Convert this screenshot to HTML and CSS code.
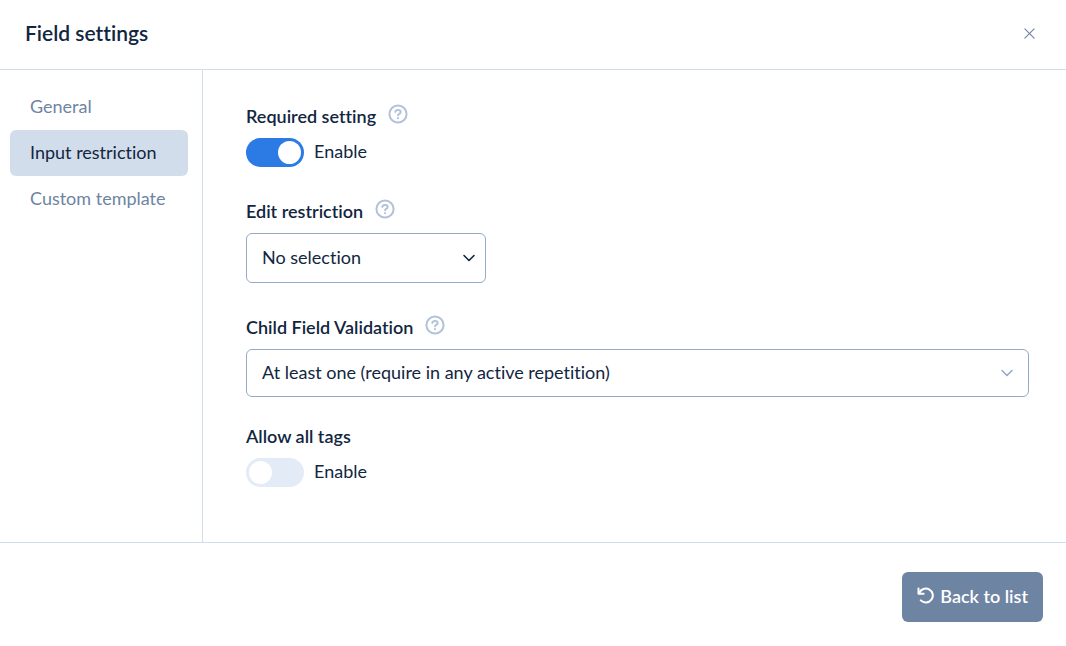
FILE: index.html
```html
<!DOCTYPE html>
<html lang="en">
  <head>
    <meta charset="UTF-8" />
    <meta name="viewport" content="width=device-width, initial-scale=1.0" />
    <title>Field settings</title>
    <link rel="stylesheet" href="styles.css">
  </head>
  <body>
    <svg class="sprite" aria-hidden="true">
      <symbol id="icon-help" viewBox="0 0 20 20">
        <circle cx="10" cy="10" r="8.6" />
        <path d="M7.3 7.9c.3-1.3 1.3-2 2.7-2 1.6 0 2.7.9 2.7 2.1 0 1.9-2.6 1.8-2.6 3.2" />
        <path d="M10 14v.3" />
      </symbol>
      <symbol id="icon-chevron" viewBox="0 0 14 14">
        <path d="M2 4.5l5 5 5-5" />
      </symbol>
    </svg>

    <div class="modal">
      <header class="modal-header">
        <h1>Field settings</h1>
        <button type="button" class="close" aria-label="Close">
          <svg viewBox="0 0 10 10"><path d="M.8.8l8.4 8.4M9.2.8L.8 9.2" /></svg>
        </button>
      </header>

      <div class="modal-body">
        <nav class="tabs">
          <a class="tab" href="#general">General</a>
          <a class="tab active" href="#restriction">Input restriction</a>
          <a class="tab" href="#template">Custom template</a>
        </nav>

        <form class="settings" id="restriction">
          <div class="field">
            <div class="field-label">
              <span id="required-label">Required setting</span>
              <svg class="help"><use href="#icon-help" /></svg>
            </div>
            <label class="toggle">
              <input type="checkbox" role="switch" aria-describedby="required-label" checked />
              <span>Enable</span>
            </label>
          </div>

          <div class="field">
            <div class="field-label">
              <label for="edit">Edit restriction</label>
              <svg class="help"><use href="#icon-help" /></svg>
            </div>
            <div class="select select-short">
              <select id="edit">
                <option>No selection</option>
              </select>
              <svg class="chevron"><use href="#icon-chevron" /></svg>
            </div>
          </div>

          <div class="field">
            <div class="field-label">
              <label for="validation">Child Field Validation</label>
              <svg class="help"><use href="#icon-help" /></svg>
            </div>
            <div class="select">
              <select id="validation">
                <option>At least one (require in any active repetition)</option>
              </select>
              <svg class="chevron"><use href="#icon-chevron" /></svg>
            </div>
          </div>

          <div class="field">
            <div class="field-label">
              <span id="tags-label">Allow all tags</span>
            </div>
            <label class="toggle">
              <input type="checkbox" role="switch" aria-describedby="tags-label" />
              <span>Enable</span>
            </label>
          </div>
        </form>
      </div>

      <footer class="modal-footer">
        <button type="button" class="btn">
          <svg viewBox="0 0 18 18">
            <path d="M1.5 1.5v5.2h5.2" />
            <path d="M2.2 6.2a7 7 0 1 1 1.6 7.2" />
          </svg>
          Back to list
        </button>
      </footer>
    </div>
  </body>
</html>
```
FILE: styles.css
```css
* {
  box-sizing: border-box;
}

body {
  margin: 0;
  font-family: Lato, "Liberation Sans", sans-serif;
  font-size: 18px;
  font-variant-ligatures: none;
  line-height: 24px;
  color: #12263f;
  background-color: #fff;
}

svg {
  fill: none;
  stroke: currentColor;
  stroke-linecap: round;
  stroke-linejoin: round;
}

.sprite {
  display: none;
}

.modal {
  display: flex;
  flex-direction: column;
  min-height: 100vh;
}

.modal-header {
  display: flex;
  align-items: center;
  justify-content: space-between;
  padding: 19px 26px 22px 25px;
  border-bottom: 1px solid #d2ddec;
}

h1 {
  margin: 0;
  font-size: 21px;
  font-weight: 600;
  line-height: 28px;
}

.close {
  display: flex;
  padding: 5px;
  border: none;
  background: none;
  color: #6e84a3;
  cursor: pointer;
}

.close svg {
  width: 11px;
  height: 11px;
}

.modal-body {
  display: flex;
  flex: 1;
}

.tabs {
  flex: 0 0 203px;
  padding: 14px 14px 14px 10px;
  border-right: 1px solid #d2ddec;
}

.tab {
  display: block;
  padding: 10px 20px 12px;
  border-radius: 6px;
  color: #6e84a3;
  text-decoration: none;
}

.tab.active {
  background-color: #d2ddec;
  color: #12263f;
}

.settings {
  display: flex;
  flex: 1;
  flex-direction: column;
  gap: 32px;
  padding: 34px 37px 34px 43px;
}

.field {
  display: flex;
  flex-direction: column;
  gap: 10px;
}

.field:last-child {
  margin-top: -5px;
}

.field-label {
  display: flex;
  gap: 12px;
  font-weight: 600;
}

.help {
  width: 20px;
  height: 20px;
  color: #b1c2d9;
  stroke-width: 2;
}

.toggle {
  display: flex;
  align-self: flex-start;
  gap: 10px;
  line-height: 26px;
}

.toggle input {
  appearance: none;
  width: 58px;
  height: 29px;
  margin: 0;
  padding: 3px;
  border-radius: 15px;
  background-color: #e3ebf6;
  cursor: pointer;
}

.toggle input::before {
  content: "";
  display: block;
  width: 23px;
  height: 23px;
  border-radius: 50%;
  background-color: #fff;
}

.toggle input:checked {
  background-color: #2c7be5;
}

.toggle input:checked::before {
  margin-left: auto;
}

.select {
  display: grid;
  align-items: center;
}

.select select,
.select .chevron {
  grid-area: 1 / 1;
}

.select select {
  appearance: none;
  width: 100%;
  height: 48px;
  padding: 0 40px 2px 15px;
  border: 1px solid #95aac9;
  border-radius: 6px;
  background-color: #fff;
  color: inherit;
  font: inherit;
  font-variant-ligatures: none;
}

.chevron {
  justify-self: end;
  width: 14px;
  height: 14px;
  margin-right: 15px;
  color: #95aac9;
  stroke-width: 1.6;
  pointer-events: none;
}

.select-short {
  width: 240px;
}

.select-short select {
  height: 50px;
}

.select-short .chevron {
  margin-right: 10px;
  color: #12263f;
}

.modal-footer {
  display: flex;
  justify-content: flex-end;
  padding: 29px 23px 24px;
  border-top: 1px solid #d2ddec;
}

.btn {
  display: flex;
  align-items: center;
  gap: 5px;
  padding: 12px 15px 14px;
  border: none;
  border-radius: 6px;
  background-color: #6e84a3;
  color: #fff;
  font: inherit;
  font-weight: 600;
  cursor: pointer;
}

.btn svg {
  width: 18px;
  height: 18px;
  stroke-width: 2;
}
```
